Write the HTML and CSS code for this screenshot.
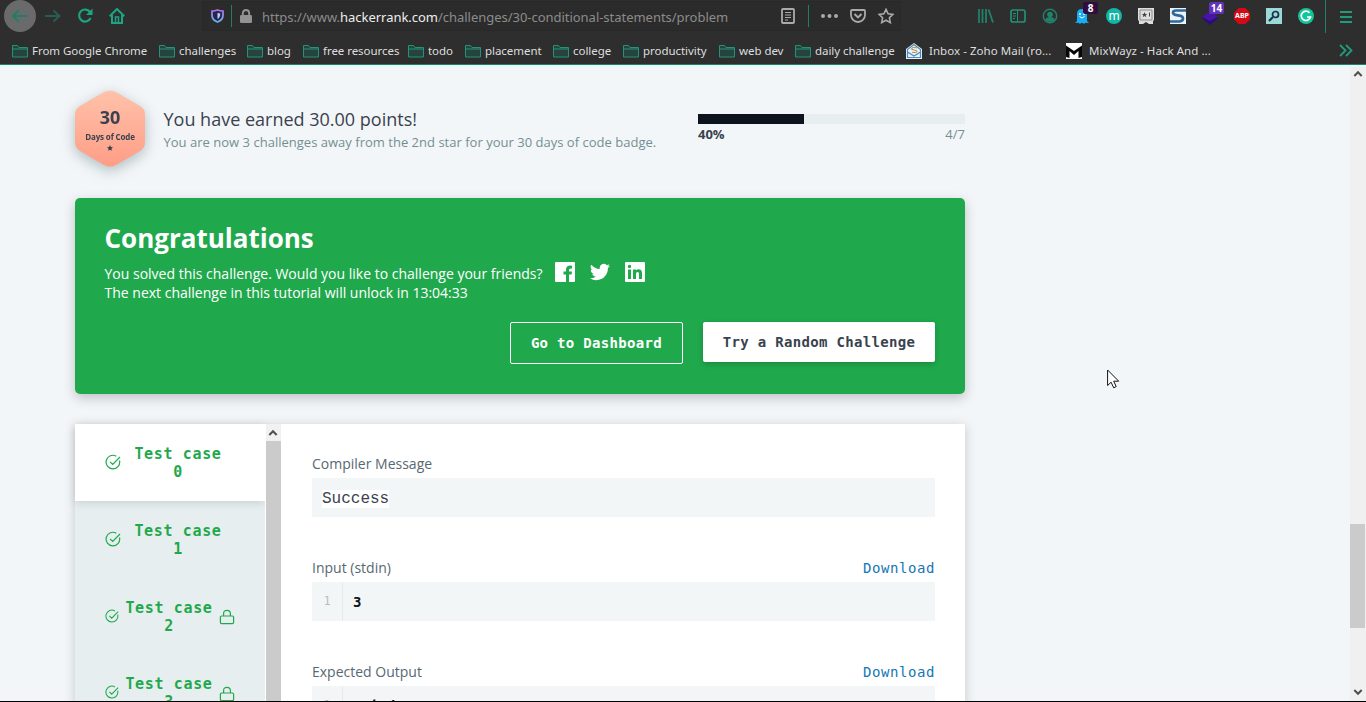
FILE: index.html
```html
<!DOCTYPE html>
<html lang="en">
<head>
<meta charset="utf-8">
<title>Day 3: Intro to Conditional Statements | HackerRank</title>
<link rel="stylesheet" href="styles.css">
</head>
<body>
<svg class="defs" width="0" height="0">
  <symbol id="folder" viewBox="0 0 16 14"><path d="M.5 12.5v-11h5l1.5 2h8.5v9.500h-15z" fill="#26433d"/><path d="M.5 13V1.500H5.500L7 3.500H15.500V13zM.5 5H15.500" fill="none" stroke="#219478"/></symbol>
  <symbol id="check" viewBox="0 0 16 16"><path d="M14.500 6.500A6.800 6.800 0 1 1 11.300 2.200M5 7.800l2.700 2.700L15 3" fill="none" stroke="currentColor" stroke-width="1.200"/></symbol>
  <symbol id="lock" viewBox="0 0 16 16"><path d="M2.600 7h10.800q1.200 0 1.200 1.200v5q0 1.400-1.200 1.400H2.600q-1.200 0-1.200-1.400v-5Q1.400 7 2.600 7zM4.600 7V4.600Q4.600 1.300 8 1.300t3.400 3.300V7" fill="none" stroke="currentColor" stroke-width="1.200"/></symbol>
  <symbol id="up" viewBox="0 0 10 8"><path d="M1.300 6 5 2.200 8.700 6" fill="none" stroke="#505050" stroke-width="2"/></symbol>
</svg>

<header class="browser">
  <nav class="toolbar">
    <div class="nav">
      <span class="slot back"><svg width="18" height="16" viewBox="0 0 18 16"><path d="M17 8H2M8 2 2 8l6 6" fill="none" stroke="#247b67" stroke-width="2"/></svg></span>
      <span class="slot"><svg width="16" height="14" viewBox="0 0 16 14"><path d="M0 7h14M8.500 1.500 14.500 7l-6 5.500" fill="none" stroke="#285d51" stroke-width="2"/></svg></span>
      <span class="slot"><svg width="16" height="16" viewBox="0 0 16 16"><path d="M13 4A6 6 0 1 0 13.600 10" fill="none" stroke="#1ba583" stroke-width="2.200"/><path d="M15.500.5v6.500H9z" fill="#1ba583"/></svg></span>
      <span class="slot"><svg width="16" height="16" viewBox="0 0 16 16"><path d="M.7 8.300 8 1l7.300 7.300M3 7v8h10V7" fill="none" stroke="#1ba583" stroke-width="2"/><path d="M6.500 15V9h3v6" fill="none" stroke="#1ba583" stroke-width="1.500"/></svg></span>
    </div>
    <div class="urlbar">
      <svg width="13" height="14" viewBox="0 0 13 14"><defs><linearGradient id="sg" x2="0" y2="1"><stop stop-color="#b36ce8"/><stop offset="1" stop-color="#60b7ee"/></linearGradient></defs><path d="M6.500 1Q9 2 12 2.200V6q0 5-5.500 7Q1 11 1 6V2.200Q4 2 6.500 1z" fill="#25254a" stroke="url(#sg)" stroke-width="1.800"/><path d="M6.500 4v6Q4 8.500 4 5z" fill="#25254a"/><path d="M6.500 3.800q1.500.6 2.800.7 0 4-2.800 5.600z" fill="#b9ccf4"/></svg>
      <i class="rule"></i>
      <svg class="padlock" width="12" height="14" viewBox="0 0 12 14"><rect y="6" width="12" height="8" rx="1.300" fill="#929292"/><path d="M2.800 7V4.500Q2.800 1 6 1t3.200 3.500V7" fill="none" stroke="#929292" stroke-width="1.900"/></svg>
      <span class="url">https://www.<b>hackerrank.com</b>/challenges/30-conditional-statements/problem</span>
      <span class="actions">
        <svg width="14" height="16" viewBox="0 0 14 16"><rect x="1" y="1" width="12" height="14" rx="1" fill="none" stroke="#aaa" stroke-width="1.800"/><path d="M4 4.500h6M4 7h6M4 9.500h6M4 12h3" stroke="#aaa"/></svg>
        <i class="rule"></i>
        <svg class="dots" width="17" height="4" viewBox="0 0 17 4"><g fill="#aaa"><circle cx="2" cy="2" r="2"/><circle cx="8.500" cy="2" r="2"/><circle cx="15" cy="2" r="2"/></g></svg>
        <svg width="16" height="14" viewBox="0 0 16 14"><path d="M2 1h12q1 0 1 1v4a7 7 0 0 1-14 0V2q0-1 1-1z" fill="none" stroke="#aaa" stroke-width="1.800"/><path d="m4.500 5 3.500 3.400L11.500 5" fill="none" stroke="#aaa" stroke-width="2"/></svg>
        <svg width="16" height="16" viewBox="0 0 16 16"><path d="m8 1.400 2.100 4.400 4.800.6-3.500 3.400.9 4.800L8 12.200l-4.300 2.400.9-4.800L1.100 6.400l4.800-.6z" fill="none" stroke="#aaa" stroke-width="1.600"/></svg>
      </span>
    </div>
    <div class="extensions">
      <span class="ext"><svg width="16" height="14" viewBox="0 0 16 14"><path d="M1 0v14M4.500 0v14M8 0v14M10.500.5 15 13.500" stroke="#20826b" stroke-width="1.800"/></svg></span>
      <span class="ext"><svg width="16" height="14" viewBox="0 0 16 14"><rect x="1" y="1" width="14" height="12" rx="2" fill="none" stroke="#20917a" stroke-width="1.700"/><path d="M7.500 1v12M3 4.500h3M3 7h3M3 9.500h2" stroke="#20917a"/></svg></span>
      <span class="ext"><svg width="16" height="16" viewBox="0 0 16 16"><circle cx="8" cy="8" r="6.700" fill="none" stroke="#20826b" stroke-width="1.400"/><circle cx="8" cy="6.500" r="2.800" fill="#20826b"/><path d="M3 12q1-3 5-3t5 3q-4 4-10 0z" fill="#20826b"/></svg></span>
      <span class="ext"><svg width="14" height="16" viewBox="0 0 14 16"><path d="M2 13V6q0-5 5-5t5 5v7l2 2-3-.3-2 1-2-1-2 1-2-1-3 .3z" fill="#18aff2"/><circle cx="5" cy="6" r="1" fill="#fff"/><circle cx="9" cy="6" r="1" fill="#fff"/><path d="M4.500 8.500q2.500 3 5 0" fill="none" stroke="#fff"/></svg><em class="badge">8</em></span>
      <span class="ext"><span class="disc teal">m</span></span>
      <span class="ext"><svg width="16" height="16" viewBox="0 0 16 16"><path d="M0 0h16v12l-1 1v3h-4l-3-2-3 2H1v-3l-1-1z" fill="#dedede"/><path d="M2 2h12v10H2z" fill="none" stroke="#8a8a8a"/><path d="m6.500 4 .8 1.900 2 .1-1.600 1.300.6 2-1.800-1.200-1.800 1.200.6-2L3.700 6l2-.1zM11 4.500h1v4h-1z" fill="#444"/></svg></span>
      <span class="ext"><svg width="16" height="16" viewBox="0 0 16 16"><path fill="#e9f3fa" d="M0 0h16v16H0z"/><path d="M16 2.500H6.500Q3 2.500 3 4.600t3.500 2.600l3 .4q3.500.5 3.500 3T9.500 13.500H0" fill="none" stroke="#326795" stroke-width="2.700"/></svg></span>
      <span class="ext"><svg class="gem" width="16" height="14" viewBox="0 0 16 14"><path d="m8 0 8 7-8 7-8-7z" fill="#2a0a80"/><path d="m8 0 8 6-8 4-8-4z" fill="#48159f"/></svg><em class="badge violet">14</em></span>
      <span class="ext"><svg width="16" height="16" viewBox="0 0 16 16"><path d="M4.700 0h6.600L16 4.700v6.600L11.300 16H4.700L0 11.300V4.700z" fill="#d30b16"/></svg><small class="abp">ABP</small></span>
      <span class="ext"><svg width="16" height="16" viewBox="0 0 16 16"><path fill="#9bd9d5" d="M0 0h16v16H0z"/><circle cx="9.500" cy="6.500" r="3" fill="none" stroke="#17324d" stroke-width="1.700"/><path d="m7 9-4 4" stroke="#17324d" stroke-width="2"/></svg></span>
      <span class="ext"><svg width="16" height="16" viewBox="0 0 16 16"><circle cx="8" cy="8" r="8" fill="#15c39a"/><path d="M11.500 4.700A4.700 4.700 0 1 0 12.500 9H9" fill="none" stroke="#fff" stroke-width="1.700"/></svg></span>
    </div>
    <div class="menu"><svg width="12" height="12" viewBox="0 0 12 12"><path d="M0 1h12M0 6h12M0 11h12" stroke="#209c7d" stroke-width="2"/></svg></div>
  </nav>
  <nav class="bookmarks">
    <span class="bm w147"><svg><use href="#folder"/></svg>From Google Chrome</span>
    <span class="bm w88"><svg><use href="#folder"/></svg>challenges</span>
    <span class="bm w56"><svg><use href="#folder"/></svg>blog</span>
    <span class="bm w105"><svg><use href="#folder"/></svg>free resources</span>
    <span class="bm w57"><svg><use href="#folder"/></svg>todo</span>
    <span class="bm w88"><svg><use href="#folder"/></svg>placement</span>
    <span class="bm w70"><svg><use href="#folder"/></svg>college</span>
    <span class="bm w96"><svg><use href="#folder"/></svg>productivity</span>
    <span class="bm w76"><svg><use href="#folder"/></svg>web dev</span>
    <span class="bm w111"><svg><use href="#folder"/></svg>daily challenge</span>
    <span class="bm site w160"><svg viewBox="0 0 16 16"><path d="M0 6 8 0l8 6v10H0z" fill="#e8f2f8"/><path d="M1.500 6.500 8 1.500l6.500 5v8h-13zM1.500 9 8 13l6.500-4" fill="none" stroke="#4b8abb" stroke-width="1.200"/><path d="M11 5q-3-1.500-5 0t2 2 3 1.800-5 .5" fill="none" stroke="#b78b3b"/></svg>Inbox - Zoho Mail (ro...</span>
    <span class="bm site"><svg viewBox="0 0 16 16"><path d="M0 0h16v16H0z" fill="#fff"/><path d="M0 2.500 8 8l8-5.500V14l-3.500 1V8L8 12 3.500 8v7L0 14z" fill="#080808"/></svg>MixWayz - Hack And ...</span>
    <svg class="more" width="14" height="13" viewBox="0 0 14 13"><path d="m1 1 5.500 5.500L1 12M7 1l5.500 5.500L7 12" fill="none" stroke="#209c7d" stroke-width="1.800"/></svg>
  </nav>
</header>

<div class="viewport">
  <main class="page">
    <section class="progress-row">
      <div class="hex">
        <svg width="70" height="77" viewBox="0 0 70 77"><defs><linearGradient id="hg" x2="0" y2="1"><stop stop-color="#ffc2aa"/><stop offset="1" stop-color="#ff9d86"/></linearGradient></defs><path d="M29 2q6-3 12 0l24 14q5 3 5 8v28q0 6-5 9L41 75q-6 3-12 0L5 61q-5-3-5-9V24q0-5 5-8z" fill="url(#hg)"/></svg>
        <div class="hex-text"><b>30</b><span>Days of Code</span><svg width="6" height="6" viewBox="0 0 10 10"><path d="m5 0 1.500 3.300 3.500.4-2.600 2.400.7 3.600L5 8 1.900 9.700l.7-3.600L0 3.700l3.500-.4z" fill="#39424e"/></svg></div>
      </div>
      <div class="earned"><h2>You have earned 30.00 points!</h2><p>You are now 3 challenges away from the 2nd star for your 30 days of code badge.</p></div>
      <div class="meter"><div class="track"><div class="fill" style="width:39.7%"></div></div><div class="meter-text"><b>40%</b><span>4/7</span></div></div>
    </section>

    <section class="congrats">
      <h1>Congratulations</h1>
      <div class="solved"><p>You solved this challenge. Would you like to challenge your friends?</p>
        <svg width="20" height="20" viewBox="0 0 20 20"><path fill-rule="evenodd" d="M1 0h18q1 0 1 1v18q0 1-1 1h-5v-7.500h2.600l.4-3h-3V8q0-1.500 1.500-1.500H17V3.700q-5.800-.8-6 3.800v2H8.500v3H11V20H1q-1 0-1-1V1q0-1 1-1z" fill="#fff"/></svg>
        <svg width="20" height="20" viewBox="0 0 24 24"><path d="M23.950 4.570a10 10 0 0 1-2.820.770 4.960 4.960 0 0 0 2.160-2.720c-.95.550-2 .960-3.130 1.190a4.920 4.920 0 0 0-8.380 4.480C7.690 8.100 4.070 6.130 1.640 3.160a4.820 4.820 0 0 0 1.520 6.570 4.900 4.900 0 0 1-2.230-.61v.06a4.920 4.920 0 0 0 3.950 4.830 5 5 0 0 1-2.210.08 4.940 4.940 0 0 0 4.600 3.420A9.870 9.870 0 0 1 0 19.540a13.990 13.990 0 0 0 7.550 2.210c9.050 0 14-7.500 14-13.980v-.64a9.940 9.940 0 0 0 2.400-2.560z" fill="#fff"/></svg>
        <svg width="20" height="20" viewBox="0 0 20 20"><path fill-rule="evenodd" d="M1 0h18q1 0 1 1v18q0 1-1 1H1q-1 0-1-1V1q0-1 1-1zM3 7.500V17h3V7.500zM4.500 2.800a1.700 1.700 0 1 0 0 3.400 1.700 1.700 0 0 0 0-3.400zM8 7.500V17h3v-5q0-2 1.500-2T14 12v5h3v-5.700Q17 7.300 13.500 7.300 11.700 7.300 11 8.500v-1z" fill="#fff"/></svg>
      </div>
      <p>The next challenge in this tutorial will unlock in 13:04:33</p>
      <div class="buttons"><button class="outline">Go to Dashboard</button><button class="solid">Try a Random Challenge</button></div>
    </section>

    <section class="results">
      <div class="tabs">
        <div class="tab active"><svg class="ck"><use href="#check"/></svg><span>Test case 0</span></div>
        <div class="tab"><svg class="ck"><use href="#check"/></svg><span>Test case 1</span></div>
        <div class="tab locked"><svg class="ck"><use href="#check"/></svg><span>Test case 2</span><svg class="lk"><use href="#lock"/></svg></div>
        <div class="tab locked fourth"><svg class="ck"><use href="#check"/></svg><span>Test case 3</span><svg class="lk"><use href="#lock"/></svg></div>
      </div>
      <div class="tabs-scroll"><svg width="10" height="8"><use href="#up"/></svg></div>
      <div class="output">
        <div class="block"><div class="label">Compiler Message</div><div class="box message"><mark>Success</mark></div></div>
        <div class="block"><div class="label">Input (stdin)<a>Download</a></div><div class="box"><span class="line-no">1</span><b>3</b></div></div>
        <div class="block"><div class="label">Expected Output<a>Download</a></div><div class="box"><span class="line-no">1</span><b>Weird</b></div></div>
      </div>
    </section>
  </main>
  <div class="scrollbar"><svg width="10" height="8"><use href="#up"/></svg><div class="thumb"></div><svg class="down" width="10" height="8"><use href="#up"/></svg></div>
</div>
<svg class="cursor" width="13" height="20" viewBox="0 0 13 20"><path d="M.6 1v15.500l3.500-3.300 2.600 5.600 2.500-1.200-2.500-5.400h5z" fill="#fff" stroke="#111"/></svg>
</body>
</html>
```
FILE: styles.css
```css
* { box-sizing: border-box; }
body { margin: 0; width: 1366px; height: 702px; overflow: hidden; background: #f3f6f8; color: #39424e; font-family: "Open Sans", sans-serif; display: flex; flex-direction: column; border-bottom: 1px solid #000; }
h1, h2, p { margin: 0; }
svg { display: block; flex: none; }
.defs { position: absolute; }

.browser { flex: none; height: 65px; background: #2e2e2e; border-bottom: 1px solid #237f6c; font-family: "Noto Sans", sans-serif; }
.toolbar { display: flex; height: 33px; }
.nav { display: flex; width: 202px; padding-left: 4px; flex: none; }
.slot { width: 32px; height: 32px; display: grid; place-items: center; }
.back { background: #6b6a6b; border-radius: 50%; margin-right: 1px; }
.urlbar { display: flex; flex: none; align-items: center; width: 699px; height: 30px; margin-top: 1px; padding-left: 8px; background: #2b2b2b; border: 1px solid #292929; }
.rule { width: 1px; height: 22px; background: #207e6b; margin-left: 7px; }
.padlock { margin: 0 10px 0 8px; }
.url { font-size: 13px; line-height: 20px; color: #8b8b8b; letter-spacing: -.03px; white-space: nowrap; margin-top: 2px; }
.url b { font-weight: 400; color: #eee; }
.actions { display: flex; align-items: center; margin-left: auto; padding-right: 6px; }
.actions .rule { margin-left: 13px; }
.actions .dots { margin: 0 12px; }
.actions svg:last-child { margin-left: 12px; }
.extensions { display: flex; flex: none; margin-left: 69px; }
.ext { position: relative; width: 32px; height: 32px; display: grid; place-items: center; }
.disc { width: 16px; height: 16px; border-radius: 50%; background: #14b5a5; color: #fff; font-size: 12px; line-height: 15px; text-align: center; }
.badge { position: absolute; left: 17px; top: 2px; width: 15px; height: 12px; border-radius: 2px; background: #330c3f; color: #fff; font: bold 10px/12px "Noto Sans", sans-serif; text-align: center; }
.violet { left: 15px; background: #6332bd; }
.gem { margin-top: 3px; }
.abp { position: absolute; color: #fff; font-size: 7px; font-weight: 700; line-height: 10px; }
.menu { flex: none; width: 41px; height: 33px; margin-left: 3px; display: grid; place-items: center; border-left: 1px solid #207e6b; }
.bookmarks { display: flex; align-items: center; height: 31px; padding: 4px 13px 0 12px; font-size: 11.5px; line-height: 18px; letter-spacing: -.05px; color: #dedede; }
.bm { display: flex; flex: none; align-items: center; white-space: nowrap; }
.bm svg { width: 16px; height: 14px; margin-right: 4px; }
.bm.site { letter-spacing: .05px; }
.bm.site svg { height: 16px; margin-right: 7px; }
.w147 { width: 147px; } .w88 { width: 88px; } .w56 { width: 56px; } .w105 { width: 105px; }
.w57 { width: 57px; } .w70 { width: 70px; } .w96 { width: 96px; } .w76 { width: 76px; }
.w111 { width: 111px; } .w160 { width: 160px; }
.more { margin-left: auto; }

.viewport { display: flex; flex: 1; min-height: 0; overflow: hidden; border-top: 2px solid #e3fbf8; }
.page { width: 890px; margin-left: 75px; }
.progress-row { display: flex; height: 131px; padding-top: 23px; }
.hex { position: relative; width: 70px; height: 77px; filter: drop-shadow(0 4px 7px rgba(75, 105, 110, .4)); }
.hex-text { position: absolute; inset: 16px 0 0; display: flex; flex-direction: column; align-items: center; }
.hex-text b { font-size: 18px; line-height: 22px; }
.hex-text span { font-size: 8px; font-weight: 700; line-height: 12px; margin: 3px 0 2px; letter-spacing: -.15px; white-space: nowrap; }
.earned { width: 534px; padding: 17px 0 0 18.500px; }
.earned h2 { font-size: 18px; font-weight: 400; line-height: 24px; white-space: nowrap; }
.earned p { font-size: 13px; line-height: 20px; letter-spacing: .015px; color: #738f93; margin-top: 1px; white-space: nowrap; }
.meter { width: 267px; margin-left: 19px; padding-top: 24px; font-size: 13px; }
.track { height: 10px; background: #e7eeef; }
.fill { height: 10px; background: #0e141e; }
.meter-text { display: flex; justify-content: space-between; line-height: 20px; }
.meter-text span { color: #738f93; }

.congrats { height: 196px; padding: 23px 30px 0 29.500px; border-radius: 5px; background: #1fa94c; color: #fff; font-size: 14px; line-height: 19px; box-shadow: 0 4px 12px rgba(50, 60, 60, .28); }
.congrats h1 { font-size: 26px; line-height: 34px; }
.solved { display: flex; align-items: center; height: 20px; margin-top: 7px; }
.solved p { width: 450.500px; margin-top: 3px; white-space: nowrap; }
.solved svg { margin: 0 15px 0 0; }
.congrats > p { margin-top: 1px; }
.buttons { display: flex; justify-content: flex-end; gap: 20px; margin-top: 20px; }
.buttons button { margin: 0; padding: 0; border-radius: 2px; font: bold 14px/20px "DejaVu Sans Mono", monospace; letter-spacing: .32px; white-space: nowrap; }
.outline { width: 173px; height: 42px; background: transparent; color: #fff; border: 1px solid #fff; }
.solid { width: 232px; height: 40px; background: #fff; color: #39424e; border: 0; box-shadow: 0 2px 6px rgba(0, 0, 0, .2); }

.results { display: flex; height: 400px; margin-top: 30px; background: #fff; box-shadow: 0 2px 10px rgba(50, 70, 75, .25); }
.tabs { width: 190px; background: #e7eeef; }
.tab { display: flex; align-items: center; height: 77px; padding-left: 30px; color: #1fa94c; font: bold 15px/18px "DejaVu Sans Mono", monospace; letter-spacing: .65px; text-align: center; }
.tab.active { background: #fff; box-shadow: 0 2px 8px rgba(60, 80, 85, .18); }
.tab span { width: 88px; margin-left: 13px; }
.ck { width: 16px; height: 16px; margin-top: -2px; }
.locked .ck { width: 14px; height: 14px; }
.locked span { margin-left: 6px; }
.lk { width: 16px; height: 16px; margin: 1px 0 0 6px; }
.fourth { height: 76px; }
.tabs-scroll { width: 16px; padding-top: 5px; border-left: 1px solid #fff; background: linear-gradient(#f1f1f1 17px, #cbcbcb 17px); }
.tabs-scroll svg { margin-left: 2px; }
.output { flex: 1; padding: 30px 30px 0 31px; }
.block { height: 104px; }
.label { display: flex; justify-content: space-between; height: 24px; font-size: 14px; line-height: 20px; color: #576871; }
.label a { color: #1577b3; font: 14px/20px "DejaVu Sans Mono", monospace; letter-spacing: .57px; }
.box { display: flex; align-items: center; height: 39px; background: #f3f6f7; font: 14px/20px "DejaVu Sans Mono", monospace; color: #0e141e; }
.message { padding: 3px 0 0 10px; font: 16px/20px "Liberation Mono", monospace; color: #39424e; }
.message mark { background: #fff; color: inherit; line-height: 18px; }
.line-no { width: 31px; height: 39px; line-height: 39px; text-align: center; border-right: 1px solid #e5e9ea; color: #b7bec2; margin-right: 10px; font-size: 12px; }

.scrollbar { display: flex; flex-direction: column; align-items: center; width: 16px; margin-left: auto; padding: 3px 1px 5px 0; background: #f0f0f0; }
.thumb { width: 15px; height: 104px; margin-top: 446px; background: #cbcbcb; }
.down { margin-top: auto; transform: rotate(180deg); }
.cursor { position: absolute; left: 1107px; top: 369px; }
```
